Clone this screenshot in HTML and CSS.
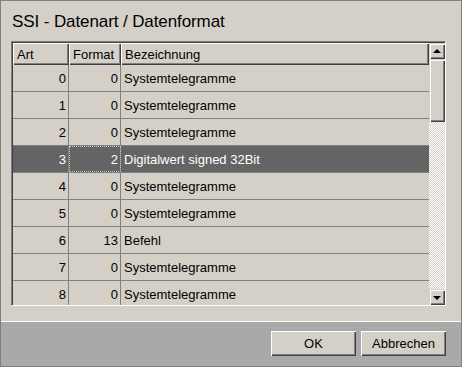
FILE: index.html
```html
<!DOCTYPE html>
<html lang="de">
<head>
    <meta charset="UTF-8">
    <title>SSI - Datenart / Datenformat</title>
    <link rel="stylesheet" href="styles.css">
</head>
<body>
    <div class="window">
        <div class="main">
            <h1 class="title">SSI - Datenart / Datenformat</h1>
            <!-- Tabelle mit Scrollbar -->
            <div class="grid">
                <div class="grid-inner">
                    <div class="table">
                        <div class="row head">
                            <div class="cell c-art">Art</div>
                            <div class="cell c-fmt">Format</div>
                            <div class="cell c-name">Bezeichnung</div>
                        </div>
                        <div class="row"><div class="cell c-art num">0</div><div class="cell c-fmt num">0</div><div class="cell c-name">Systemtelegramme</div></div>
                        <div class="row"><div class="cell c-art num">1</div><div class="cell c-fmt num">0</div><div class="cell c-name">Systemtelegramme</div></div>
                        <div class="row"><div class="cell c-art num">2</div><div class="cell c-fmt num">0</div><div class="cell c-name">Systemtelegramme</div></div>
                        <div class="row selected"><div class="cell c-art num">3</div><div class="cell c-fmt num focus">2</div><div class="cell c-name">Digitalwert signed 32Bit</div></div>
                        <div class="row"><div class="cell c-art num">4</div><div class="cell c-fmt num">0</div><div class="cell c-name">Systemtelegramme</div></div>
                        <div class="row"><div class="cell c-art num">5</div><div class="cell c-fmt num">0</div><div class="cell c-name">Systemtelegramme</div></div>
                        <div class="row"><div class="cell c-art num">6</div><div class="cell c-fmt num">13</div><div class="cell c-name">Befehl</div></div>
                        <div class="row"><div class="cell c-art num">7</div><div class="cell c-fmt num">0</div><div class="cell c-name">Systemtelegramme</div></div>
                        <div class="row"><div class="cell c-art num">8</div><div class="cell c-fmt num">0</div><div class="cell c-name">Systemtelegramme</div></div>
                    </div>
                    <div class="scrollbar">
                        <div class="sb-btn"><span class="arrow-up"></span></div>
                        <div class="sb-thumb"></div>
                        <div class="sb-track"></div>
                        <div class="sb-btn"><span class="arrow-down"></span></div>
                    </div>
                </div>
            </div>
        </div>
        <!-- Buttons -->
        <div class="footer">
            <button class="btn">OK</button>
            <button class="btn">Abbrechen</button>
        </div>
    </div>
</body>
</html>
```

FILE: styles.css
```css
body {
    margin: 0;
    font-family: "Liberation Sans", Arial, sans-serif;
}
.window {
    width: 462px;
    height: 367px;
    box-sizing: border-box;
    border: 1px solid #808080;
    background-color: #d4d0c8;
    display: flex;
    flex-direction: column;
}
.main {
    height: 320px;
    padding-left: 10px;
}
.title {
    margin: 0;
    padding: 10px 0 0 1px;
    height: 30px;
    line-height: 22px;
    font-size: 17px;
    font-weight: normal;
    letter-spacing: -0.1px;
    color: #000;
}
.grid {
    width: 435px;
    height: 265px;
    box-sizing: border-box;
    border-top: 1px solid #808080;
    border-left: 1px solid #808080;
    border-right: 1px solid #fff;
    border-bottom: 1px solid #fff;
}
.grid-inner {
    height: 100%;
    box-sizing: border-box;
    border-top: 1px solid #404040;
    border-left: 1px solid #404040;
    display: flex;
}
.table {
    flex: 1;
    overflow: hidden;
    font-size: 13px;
}
.row {
    display: flex;
    height: 27px;
    box-sizing: border-box;
    border-bottom: 1px solid #808080;
}
.cell {
    box-sizing: border-box;
    border-right: 1px solid #808080;
    display: flex;
    align-items: center;
    white-space: nowrap;
}
.c-art {
    width: 56px;
}
.c-fmt {
    width: 52px;
}
.c-name {
    flex: 1;
    border-right: none;
    padding-left: 3px;
}
.num {
    justify-content: flex-end;
    padding-right: 2px;
}
.row.head {
    height: 22px;
    border-bottom: none;
}
.row.head .cell {
    justify-content: flex-start;
    padding: 0 0 0 4px;
    border-right: none;
    box-shadow: inset 1px 1px #fff, inset -1px -1px #404040, inset -2px -2px #808080;
}
.row.selected {
    background-color: #646464;
    color: #fff;
}
.focus {
    outline: 1px dotted #c8c8c8;
    outline-offset: -1px;
}
.scrollbar {
    width: 16px;
    display: flex;
    flex-direction: column;
}
.sb-btn, .sb-thumb {
    background-color: #d4d0c8;
    box-shadow: inset 1px 1px #d4d0c8, inset 2px 2px #fff, inset -1px -1px #404040, inset -2px -2px #808080;
}
.sb-btn {
    height: 16px;
    display: flex;
    align-items: center;
    justify-content: center;
}
.sb-thumb {
    height: 63px;
}
.sb-track {
    flex: 1;
    background: repeating-conic-gradient(#fff 0 25%, #d4d0c8 0 50%) 0 0 / 2px 2px;
}
.arrow-up {
    border-left: 4px solid transparent;
    border-right: 4px solid transparent;
    border-bottom: 4px solid #000;
    margin-top: -1px;
}
.arrow-down {
    border-left: 4px solid transparent;
    border-right: 4px solid transparent;
    border-top: 4px solid #000;
    margin-top: 1px;
}
.footer {
    flex: 1;
    border-top: 1px solid #fff;
    background-color: #a9a9a9;
    display: flex;
    justify-content: flex-end;
    align-items: flex-start;
    gap: 5px;
    padding: 9px 15px 0 0;
}
.btn {
    width: 85px;
    height: 25px;
    border: none;
    background-color: #d4d0c8;
    font-family: "Liberation Sans", Arial, sans-serif;
    font-size: 13px;
    color: #000;
    padding: 0;
    box-shadow: inset 1px 1px #fff, inset -1px -1px #404040, inset -2px -2px #808080;
}
```
